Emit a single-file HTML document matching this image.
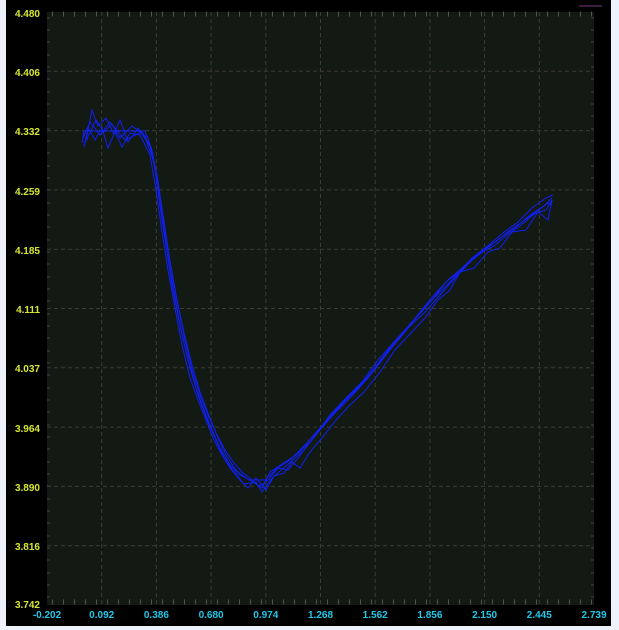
<!DOCTYPE html>
<html><head><style>
body{margin:0;width:619px;height:630px;background:#eef2fa;overflow:hidden}
svg{display:block}
</style></head><body>
<svg width="619" height="630" xmlns="http://www.w3.org/2000/svg" font-family="Liberation Sans, sans-serif" font-size="10">
<rect x="6" y="0" width="605" height="626" fill="#000"/>
<rect x="47" y="12" width="547" height="593" fill="#131a14"/>
<g stroke="#3c3c34" stroke-dasharray="4,3" stroke-width="1">
<line x1="47" y1="71.3" x2="594" y2="71.3"/><line x1="47" y1="130.6" x2="594" y2="130.6"/>
<line x1="47" y1="189.9" x2="594" y2="189.9"/><line x1="47" y1="249.2" x2="594" y2="249.2"/>
<line x1="47" y1="308.5" x2="594" y2="308.5"/><line x1="47" y1="367.8" x2="594" y2="367.8"/>
<line x1="47" y1="427.1" x2="594" y2="427.1"/><line x1="47" y1="486.4" x2="594" y2="486.4"/>
<line x1="47" y1="545.7" x2="594" y2="545.7"/>
<line x1="101.7" y1="12" x2="101.7" y2="605"/><line x1="156.4" y1="12" x2="156.4" y2="605"/>
<line x1="211.1" y1="12" x2="211.1" y2="605"/><line x1="265.8" y1="12" x2="265.8" y2="605"/>
<line x1="320.5" y1="12" x2="320.5" y2="605"/><line x1="375.2" y1="12" x2="375.2" y2="605"/>
<line x1="429.9" y1="12" x2="429.9" y2="605"/><line x1="484.6" y1="12" x2="484.6" y2="605"/>
<line x1="539.3" y1="12" x2="539.3" y2="605"/>
</g>
<g stroke="#5a5248" stroke-width="1" stroke-dasharray="1,10">
<line x1="52" y1="14" x2="594" y2="14" stroke-width="5"/>
<line x1="52" y1="602" x2="594" y2="602" stroke-width="5"/>
</g>
<g stroke="#4a443c" stroke-width="1">
<path d="M47 18h3M47 30h3M47 42h3M47 55h3M47 67h3M47 79h3M47 92h3M47 104h3M47 116h3M47 129h3M47 141h3M47 153h3M47 166h3M47 178h3M47 190h3M47 203h3M47 215h3M47 227h3M47 240h3M47 252h3M47 264h3M47 277h3M47 289h3M47 301h3M47 314h3M47 326h3M47 338h3M47 351h3M47 363h3M47 375h3M47 388h3M47 400h3M47 412h3M47 425h3M47 437h3M47 449h3M47 462h3M47 474h3M47 486h3M47 499h3M47 511h3M47 523h3M47 536h3M47 548h3M47 560h3M47 573h3M47 585h3M47 597h3"/>
<path d="M591 18h3M591 30h3M591 42h3M591 55h3M591 67h3M591 79h3M591 92h3M591 104h3M591 116h3M591 129h3M591 141h3M591 153h3M591 166h3M591 178h3M591 190h3M591 203h3M591 215h3M591 227h3M591 240h3M591 252h3M591 264h3M591 277h3M591 289h3M591 301h3M591 314h3M591 326h3M591 338h3M591 351h3M591 363h3M591 375h3M591 388h3M591 400h3M591 412h3M591 425h3M591 437h3M591 449h3M591 462h3M591 474h3M591 486h3M591 499h3M591 511h3M591 523h3M591 536h3M591 548h3M591 560h3M591 573h3M591 585h3M591 597h3"/>
</g>
<line x1="579" y1="6" x2="602" y2="6" stroke="#7a3a7a" stroke-width="1"/>
<g fill="none" stroke="#1020f0" stroke-width="1">
<polyline points="82,143 84,131 145,131 152,150 158,182 164,225 170,262 177,300 185,340 192,370 200,395 208,415 216,433 225,450 234,463 243,473 252,480 265,480 275,470 290,460 305,445 320,428 338,408 355,390 372,373 390,350 408,328 425,312 440,295 455,278 470,262 485,250 500,238 515,228 530,215 545,205 552,198"/>
<polyline points="84,147 88,128 95,140 102,128 108,148 115,132 122,147 130,133 140,135 150,155 156,190 162,232 168,270 175,308 182,345 190,378 198,400 206,420 214,440 222,455 230,468 240,480 248,488 256,478 266,490 274,476 284,473 292,462 300,468 310,452 322,438 336,420 350,405 364,392 380,372 395,350 410,334 425,318 438,300 450,290 460,272 474,268 488,252 500,248 512,232 526,230 538,212 548,220 552,200"/>
<polyline points="86,140 92,110 98,126 106,118 114,134 120,120 128,142 138,128 146,140 154,162 160,205 166,245 172,285 180,325 188,360 196,388 204,410 212,430 220,448 228,462 238,474 250,480 262,488 270,472 282,464 296,455 312,440 326,422 344,402 360,386 376,366 392,345 406,330 420,312 434,295 448,280 462,268 476,255 490,244 504,232 518,222 532,208 546,198 553,195"/>
<polyline points="83,138 90,122 100,135 110,122 125,140 142,132 151,148 157,175 163,215 169,255 176,295 184,333 192,365 200,392 210,418 218,438 226,455 236,470 246,478 260,486 268,480 278,468 288,470 298,458 316,434 330,415 346,398 362,382 378,360 394,342 412,322 428,304 444,288 458,274 472,258 486,248 498,240 510,230 522,222 536,212 548,203 552,205"/>
<polyline points="84,145 96,120 104,132 112,124 120,138 132,126 148,138 155,168 161,212 167,252 174,292 182,335 190,368 198,395 207,420 216,440 224,458 234,472 244,484 256,482 262,492 272,478 286,466 304,450 318,432 334,414 352,396 368,378 384,356 400,338 416,318 432,300 446,282 462,270 478,254 494,246 506,236 520,226 534,214 546,210 552,200"/>
</g>
<g fill="#d8e830" font-weight="bold" text-anchor="end">
<text x="40" y="17">4.480</text><text x="40" y="76">4.406</text><text x="40" y="135">4.332</text>
<text x="40" y="195">4.259</text><text x="40" y="254">4.185</text><text x="40" y="313">4.111</text>
<text x="40" y="372">4.037</text><text x="40" y="432">3.964</text><text x="40" y="491">3.890</text>
<text x="40" y="550">3.816</text><text x="40" y="608">3.742</text>
</g>
<g fill="#20c8e8" font-weight="bold" text-anchor="middle">
<text x="47" y="618">-0.202</text><text x="101.7" y="618">0.092</text><text x="156.4" y="618">0.386</text>
<text x="211.1" y="618">0.680</text><text x="265.8" y="618">0.974</text><text x="320.5" y="618">1.268</text>
<text x="375.2" y="618">1.562</text><text x="429.9" y="618">1.856</text><text x="484.6" y="618">2.150</text>
<text x="539.3" y="618">2.445</text><text x="594" y="618">2.739</text>
</g>
</svg>
</body></html>
